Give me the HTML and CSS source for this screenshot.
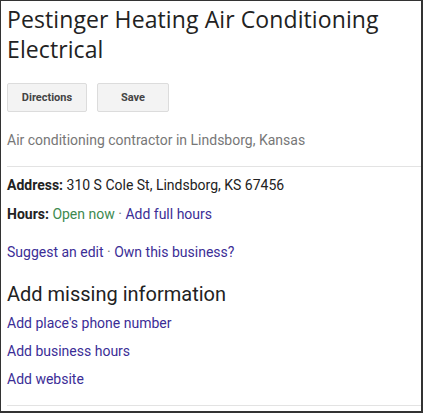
FILE: index.html
```html
<!DOCTYPE html>
<html>
<head>
<meta charset="utf-8">
<link rel="stylesheet" href="styles.css">
</head>
<body>
<div class="panel">
  <h1 class="title">Pestinger Heating Air Conditioning Electrical</h1>
  <div class="actions">
    <button class="btn btn-dir">Directions</button>
    <button class="btn btn-save">Save</button>
  </div>
  <div class="category">Air conditioning contractor in Lindsborg, Kansas</div>
  <div class="divider"></div>
  <div class="info">
    <div class="row"><b>Address:</b> 310 S Cole St, Lindsborg, KS 67456</div>
    <div class="row"><b>Hours:</b> <span class="open">Open now</span> <span class="dot">·</span> <a class="link">Add full hours</a></div>
  </div>
  <div class="edit"><a class="link">Suggest an edit</a> <span class="dot">·</span> <a class="link">Own this business?</a></div>
  <h2 class="missing">Add missing information</h2>
  <ul class="missing-list">
    <li><a class="link">Add place's phone number</a></li>
    <li><a class="link">Add business hours</a></li>
    <li><a class="link">Add website</a></li>
  </ul>
  <div class="divider bottom"></div>
</div>
</body>
</html>
```

FILE: styles.css
```css
html, body {
  margin: 0;
  padding: 0;
  background: #fff;
}
.panel {
  box-sizing: border-box;
  width: 423px;
  height: 413px;
  border-style: solid;
  border-color: #333;
  border-width: 1px 2px 2px 1px;
  padding: 0 0 0 6px;
  font-family: Roboto, "Liberation Sans", sans-serif;
  color: #222;
  overflow: hidden;
}
.title {
  margin: 0;
  padding-top: 3px;
  font-family: "Open Sans", Roboto, sans-serif;
  font-weight: 400;
  font-size: 23px;
  letter-spacing: 0.1px;
  line-height: 30px;
  color: #222;
}
.actions {
  display: flex;
  gap: 10px;
  margin-top: 19px;
}
.btn {
  box-sizing: border-box;
  height: 29px;
  background: #f3f3f3;
  border: 1px solid #dcdcdc;
  border-radius: 2px;
  font-family: Roboto, sans-serif;
  font-weight: 700;
  font-size: 11px;
  color: #444;
  padding: 0;
}
.btn-dir { width: 80px; }
.btn-save { width: 72px; }
.category {
  margin-top: 18px;
  font-size: 14px;
  line-height: 20px;
  color: #777;
}
.divider {
  height: 1px;
  background: #e3e3e3;
  margin-top: 16px;
}
.info { margin-top: 4px; }
.row {
  font-size: 14px;
  line-height: 29px;
}
.row b { font-weight: 700; }
.open { color: #3d8a4f; }
.dot { color: #777; }
.link { color: #3b2d96; text-decoration: none; cursor: pointer; }
.edit {
  margin-top: 9px;
  font-size: 14px;
  line-height: 29px;
}
.missing {
  margin: 14px 0 0;
  font-size: 20px;
  font-weight: 400;
  line-height: 26px;
  color: #222;
}
.missing-list {
  list-style: none;
  margin: 2px 0 0;
  padding: 0;
  font-size: 14px;
  line-height: 28px;
}
.divider.bottom { margin-top: 12px; }
```
